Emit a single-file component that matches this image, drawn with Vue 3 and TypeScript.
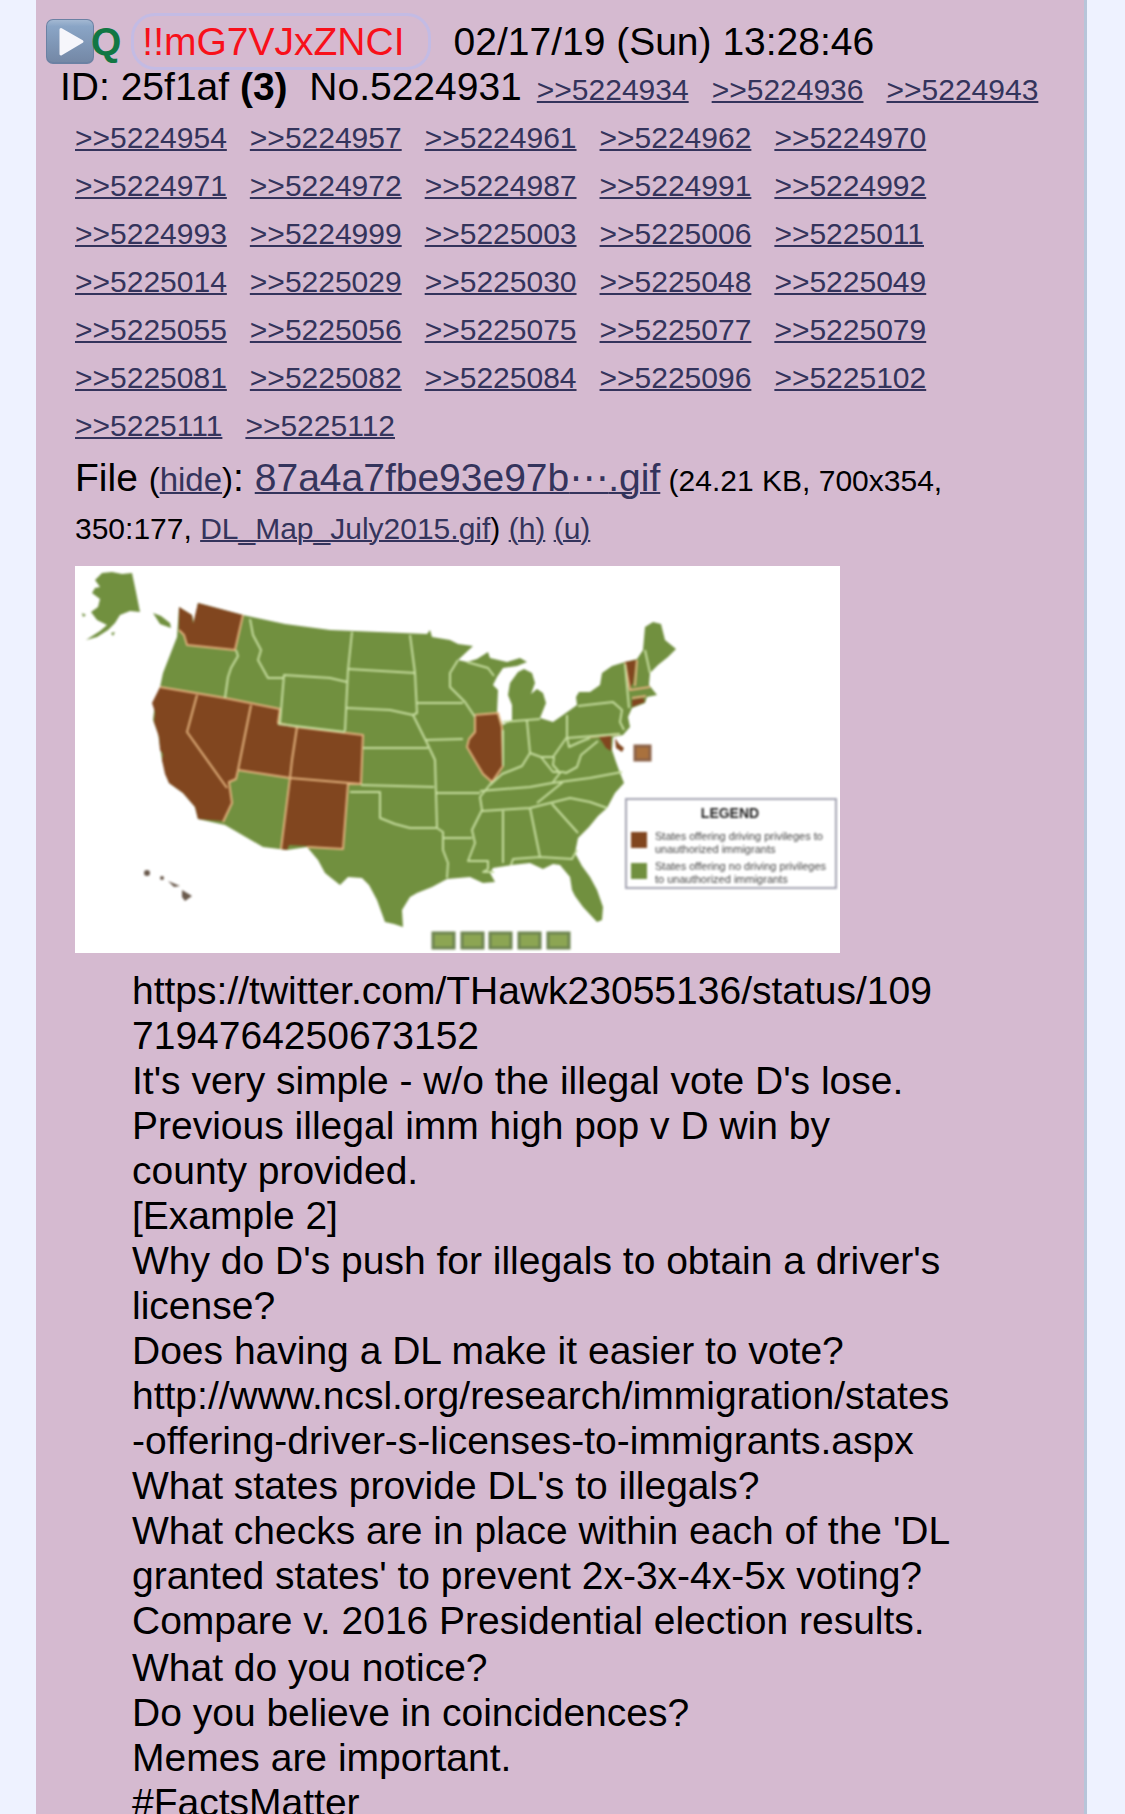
<script setup lang="ts">
interface Segment {
  text: string
  url?: boolean
}

const replies: number[] = [
  5224934, 5224936, 5224943,
  5224954, 5224957, 5224961, 5224962, 5224970,
  5224971, 5224972, 5224987, 5224991, 5224992,
  5224993, 5224999, 5225003, 5225006, 5225011,
  5225014, 5225029, 5225030, 5225048, 5225049,
  5225055, 5225056, 5225075, 5225077, 5225079,
  5225081, 5225082, 5225084, 5225096, 5225102,
  5225111, 5225112,
]

const blocks: Segment[][] = [
  [
    { text: 'https://twitter.com/THawk23055136/status/1097194764250673152', url: true },
    { text: "It's very simple - w/o the illegal vote D's lose." },
    { text: 'Previous illegal imm high pop v D win by county provided.' },
    { text: '[Example 2]' },
    { text: "Why do D's push for illegals to obtain a driver's license?" },
    { text: 'Does having a DL make it easier to vote?' },
    { text: 'http://www.ncsl.org/research/immigration/states-offering-driver-s-licenses-to-immigrants.aspx', url: true },
    { text: "What states provide DL's to illegals?" },
    { text: "What checks are in place within each of the 'DL granted states' to prevent 2x-3x-4x-5x voting?" },
    { text: 'Compare v. 2016 Presidential election results.' },
  ],
  [
    { text: 'What do you notice?' },
    { text: 'Do you believe in coincidences?' },
    { text: 'Memes are important.' },
    { text: '#FactsMatter' },
  ],
]

const islandTiles: number[] = [432, 461, 489, 518, 547]
</script>

<template>
  <div class="page">
    <article class="post">
      <header class="intro">
        <button class="menu" type="button" aria-label="Post menu">
          <svg width="48" height="45" viewBox="0 0 48 45" aria-hidden="true">
            <defs>
              <linearGradient id="tile" x1="0" y1="0" x2="0" y2="1">
                <stop offset="0" stop-color="#a3b8d2" />
                <stop offset="0.15" stop-color="#8aa5c6" />
                <stop offset="1" stop-color="#7488a6" />
              </linearGradient>
            </defs>
            <rect x="0" y="0" width="48" height="45" rx="7" fill="#6b81a3" />
            <rect x="1" y="1" width="46" height="42" rx="6" fill="url(#tile)" />
            <path d="M15 10.500 36 22.500 15 35Z" fill="#f6f6fb" stroke="#f6f6fb" stroke-width="3" stroke-linejoin="round" />
          </svg>
        </button>
        <b class="name">Q</b>
        <span class="trip">!!mG7VJxZNCI</span>
        <time datetime="2019-02-17T13:28:46">02/17/19 (Sun) 13:28:46</time>
      </header>

      <div class="refs">
        <span class="ident">ID: 25f1af <b>(3)</b>&nbsp; No.5224931</span><a
          v-for="id in replies"
          :key="id"
          class="ref"
          :href="'#' + id"
        >&gt;&gt;{{ id }}</a>
      </div>

      <div class="file">
        File <span class="toggle">(<a href="#hide">hide</a>)</span>:
        <a href="#file">87a4a7fbe93e97b<span class="dots">⋯</span>.gif</a>
        <small> (24.21 KB, 700x354, 350:177, <a href="#original">DL_Map_July2015.gif</a>) <a href="#h">(h)</a> <a href="#u">(u)</a></small>
      </div>

      <svg class="map" viewBox="75 566 765 387" role="img" aria-label="Map of states offering driving privileges">
        <rect x="75" y="566" width="765" height="387" fill="#fff" />
        <g class="soft">
          <g fill="#71903f">
            <path d="M102 573 112 572 122 574 132 573 136 592 140 612 130 611 120 615 115 623 108 630 97 637 86 640 100 631 107 625 97 620 91 612 98 607 100 599 92 593 95 588 100 587 95 580Z" />
            <path d="M153 613 161 616 170 623 171 628 160 624Z" />
            <path d="M111 633 115 632 113 636Z" />
            <path d="M82 613 86 615 83 617Z" />
            <path d="M179 607 192 615 194 623 198 603 243 615 285 624 330 630 427 634 430 630 432 637 450 640 458 644 473 646 458 660 467 662 477 659 488 652 490 658 507 662 520 658 527 662 517 666 503 668 497 677 493 685 498 690 497 713 503 725 512 720 512 705 508 695 510 683 518 672 524 669 532 673 535 683 531 694 537 689 543 693 546 703 540 718 553 722 563 715 577 705 576 697 579 692 590 692 600 685 602 673 612 666 625 662 637 659 643 650 645 627 653 622 661 624 665 640 676 649 668 657 658 665 650 673 649 685 657 695 647 697 645 703 632 708 628 717 630 727 623 735 613 737 612 750 616 762 620 773 624 783 615 793 607 808 598 816 589 827 578 838 575 853 582 866 590 877 597 890 603 907 602 920 597 922 583 907 575 896 572 890 570 877 560 865 553 864 543 869 530 863 512 865 493 868 490 873 495 882 483 883 470 877 447 879 432 887 417 893 410 897 402 910 403 927 394 924 385 922 377 900 369 885 362 878 348 877 340 885 330 877 325 873 318 860 307 847 287 850 263 847 225 825 198 819 195 807 183 793 169 783 162 760 158 733 153 720 155 703 160 687 163 673 177 637Z" />
          </g>
          <g fill="#81461f">
            <path d="M179 607 192 615 193 624 198 603 243 615 235 650 187 645 184 635 179 630Z" />
            <path d="M160 687 225 698 280 709 278 723 297 727 363 735 361 784 348 783 343 849 307 846 289 845 287 850 281 849 290 778 238 770 236 779 229 782 232 803 223 821 198 819 195 807 183 793 169 783 165 774 162 760 163 754 160 750 159 737 154 722 155 712 152 703Z" />
            <path d="M474 715 497 713 501 727 503 765 500 774 492 781 483 774 477 764 467 747 469 739 475 732 476 722Z" />
            <path d="M625 662 636 660 633 683 630 688Z" />
            <path d="M632 700 643 698 645 702 632 707Z" />
            <path d="M599 737 611 735 611 751 606 748ZM615 738 619 744 624 748 622 752 616 748Z" />
          </g>
          <g fill="none" stroke="#e0b07c" stroke-width="2" stroke-linejoin="round">
            <path d="M179 630 184 635 187 645 235 650 243 615" />
            <path d="M160 687 225 698 280 709 278 723 297 727 363 735 361 784 348 784 343 849 307 847" />
            <path d="M197 695 187 732 227 788M251 705 240 760 238 770M297 727 292 760 290 778 281 849M223 822 232 803 229 782 236 779 238 770 290 778 361 784" />
            <path d="M474 715 498 713 502 727 503 766 492 782 483 774 477 764 467 747 469 739 475 732 475 717" />
            <path d="M625 663 630 690 650 687M632 698 646 696M637 660 635 686M590 737 620 734" />
          </g>
          <g fill="none" stroke="#c6dd9f" stroke-width="2" stroke-linejoin="round">
            <path d="M236 650 238 656 231 668 228 677 225 698M250 619 253 635 261 650 258 660 268 678 283 678M280 723 284 675 330 678 347 682M352 632 348 670 345 731M278 724 345 732" />
            <path d="M348 669 415 673M410 635 415 673 417 713 413 715 427 743 435 760 437 827M347 708 390 710 413 715M363 748 428 748M417 703 463 703" />
            <path d="M458 660 450 673 450 687 465 702 475 717M425 740 463 739M467 662 488 668 494 676" />
            <path d="M503 722 540 719M527 721 530 753 541 757 553 757 567 737 567 715M503 730 503 766M530 753 522 766 502 774 490 785" />
            <path d="M567 738 620 734M578 706 613 702 622 710 620 722 624 730M625 664 629 708M645 650 650 673" />
            <path d="M361 785 434 787M350 792 380 792 380 818 395 824 410 828 437 828 443 832 443 850 448 863 447 878M436 793 480 793M443 838 472 838" />
            <path d="M492 782 480 797 482 810 472 830 475 843 468 861 488 861 488 869 483 872 494 872" />
            <path d="M480 791 530 787 552 783 590 778 622 772M482 811 530 808 550 803 570 798 590 802 607 808M503 811 503 863M530 808 540 857 513 859 511 865M540 857 572 859 577 850M552 804 578 833M537 803 563 782" />
            <path d="M541 757 553 772 563 772 566 773 577 767 581 755 598 741M553 782 560 773 553 765 554 757M567 737 569 747 580 742 590 738" />
          </g>
          <g fill="#6a5a4c">
            <circle cx="147" cy="873" r="3" />
            <circle cx="162" cy="878" r="2" />
            <path d="M168 881 180 886 174 887Z" />
            <path d="M182 890 192 896 185 901 182 897Z" />
          </g>
          <rect x="635" y="746" width="15" height="14" fill="#a9713d" stroke="#8b6248" stroke-width="3" />
          <g fill="#8ca553" stroke="#6d8450" stroke-width="3">
            <rect v-for="x in islandTiles" :key="x" :x="x + 1" y="933" width="21" height="15" />
          </g>
          <rect x="626" y="799" width="210" height="89" fill="#fff" stroke="#a4a4b2" stroke-width="2" />
          <rect x="631" y="832" width="16" height="16" fill="#81461f" />
          <rect x="631" y="863" width="16" height="16" fill="#71903f" />
          <text class="legend-title" x="730" y="818" text-anchor="middle">LEGEND</text>
          <g class="legend-text">
            <text x="655" y="840">States offering driving privileges to</text>
            <text x="655" y="853">unauthorized immigrants</text>
            <text x="655" y="870">States offering no driving privileges</text>
            <text x="655" y="883">to unauthorized immigrants</text>
          </g>
        </g>
      </svg>

      <div class="body">
        <div v-for="(block, i) in blocks" :key="i" class="block">
          <p v-for="line in block" :key="line.text" :class="{ url: line.url }">{{ line.text }}</p>
        </div>
      </div>
    </article>
  </div>
</template>

<style>
body {
  margin: 0;
  background: #eef2ff;
}
</style>

<style scoped>
.page {
  height: 100vh;
  overflow: hidden;
  padding: 0 38px 0 36px;
  background: #eef2ff;
  font-family: "Liberation Sans", Arial, sans-serif;
  font-size: 39px;
  line-height: 45px;
  color: #000;
  box-sizing: border-box;
}

.post {
  min-height: 100%;
  padding: 19px 0 0 39px;
  background: #d5bad0;
  border-right: 3px solid #b7c5d9;
  box-sizing: border-box;
}

.intro {
  display: flex;
  align-items: center;
  height: 44px;
  margin-left: -29px;
  white-space: nowrap;
}

.menu {
  display: flex;
  padding: 0;
  border: 0;
  background: none;
}

.name {
  margin-left: -3px;
  color: #117743;
}

.trip {
  margin-left: 10px;
  padding: 3px 23px 3px 8px;
  border: 3px solid #c3bbe4;
  border-radius: 24px;
  color: #f8101a;
}

time {
  margin-left: 23px;
}

.refs {
  padding-right: 12px;
  line-height: 48px;
  text-indent: -15px;
}

.ident {
  margin-right: 15px;
}

a {
  color: #34345c;
  text-decoration: underline;
  text-decoration-thickness: 2px;
}

.ref {
  display: inline-block;
  margin-right: 23px;
  font-size: 30px;
  line-height: 30px;
  text-indent: 0;
}

.file {
  margin-top: 7px;
  padding-right: 30px;
  line-height: 48px;
}

.toggle {
  font-size: 33px;
  line-height: 33px;
}

small {
  font-size: 30px;
  line-height: 30px;
}

.dots {
  font-family: "DejaVu Sans", sans-serif;
  line-height: 1;
}

.map {
  display: block;
  width: 100%;
  max-width: 765px;
  margin-top: 16px;
}

.soft {
  filter: blur(1px);
}

.legend-title {
  font-size: 14px;
  font-weight: 700;
  fill: #222;
}

.legend-text {
  font-size: 11px;
  fill: #444;
}

.body {
  max-width: 818px;
  margin: 15px 0 0 57px;
}

.block + .block {
  margin-top: 2px;
}

p {
  margin: 0;
}

.url {
  line-break: anywhere;
}
</style>
